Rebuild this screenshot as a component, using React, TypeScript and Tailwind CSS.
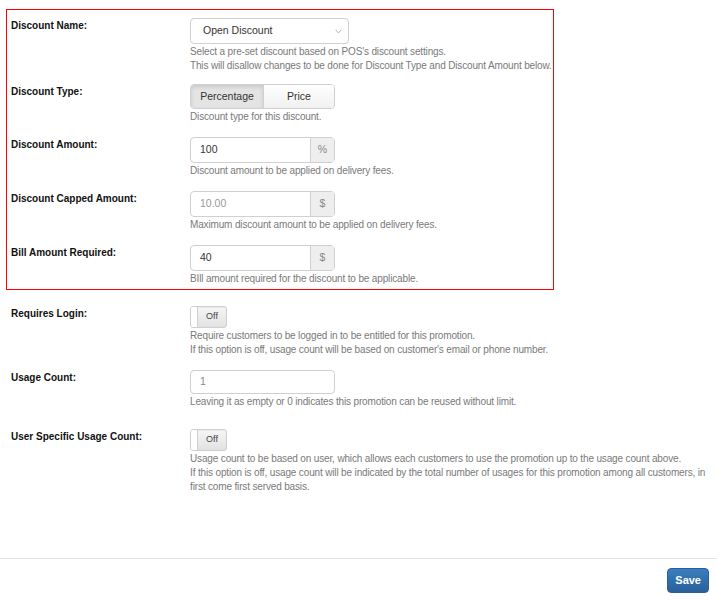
import React from "react"

function Help({ lines }: { lines: string[] }) {
  return (
    <div className="mt-[1px] text-[10px] leading-[14px] tracking-[-0.15px] text-[#7a7a7a]">
      {lines.map((l, i) => (
        <p key={i}>{l}</p>
      ))}
    </div>
  )
}

function Row({ label, children, className = "" }: { label: string; children: React.ReactNode; className?: string }) {
  return (
    <div className={"flex " + className}>
      <label className="w-[179px] shrink-0 pt-[1px] text-[10px] font-bold leading-[14px] text-[#111]">{label}</label>
      <div className="flex flex-col">{children}</div>
    </div>
  )
}

function AddonInput({ value, addon, muted }: { value: string; addon: string; muted?: boolean }) {
  return (
    <div className="flex h-[26px] w-[145px] rounded-[4px] border border-[#d0d0d0]">
      <div className={"flex flex-1 items-center px-[9px] text-[10.5px] " + (muted ? "text-[#9a9a9a]" : "text-[#333]")}>
        {value}
      </div>
      <div className="flex w-[24px] items-center justify-center border-l border-[#d0d0d0] bg-[#eeeeee] text-[10.5px] text-[#888]">
        {addon}
      </div>
    </div>
  )
}

function Toggle() {
  return (
    <div className="flex h-[22px] w-[37px] overflow-hidden rounded-[3px] border border-[#cfcfcf] bg-gradient-to-b from-[#f6f6f6] to-[#e2e2e2] shadow-[inset_0_1px_1px_rgba(0,0,0,0.05)]">
      <div className="w-[7px] border-r border-[#cfcfcf] bg-white" />
      <div className="flex flex-1 items-center justify-center text-[9px] text-[#444]">Off</div>
    </div>
  )
}

export default function App() {
  return (
    <div className="relative h-[601px] w-[717px] bg-white font-['Liberation_Sans',Arial,sans-serif]">
      <div className="pt-[9px] pl-[6px]">
        <div className="w-[548px] border border-[#ff0000] pl-[4px] pt-[8px] pb-[3px]">
          <Row label="Discount Name:" className="mb-[11px]">
            <div className="flex h-[26px] w-[159px] items-center justify-between rounded-[4px] border border-[#d0d0d0] bg-white pl-[12px] pr-[6px] text-[10.5px] text-[#333]">
              <span>Open Discount</span>
              <svg width="7" height="5" viewBox="0 0 7 5" className="text-[#999]">
                <path d="M0.5 0.8 L3.5 3.8 L6.5 0.8" fill="none" stroke="currentColor" strokeWidth="0.8" />
              </svg>
            </div>
            <Help
              lines={[
                "Select a pre-set discount based on POS's discount settings.",
                "This will disallow changes to be done for Discount Type and Discount Amount below.",
              ]}
            />
          </Row>

          <Row label="Discount Type:" className="mb-[13px]">
            <div className="flex h-[25px] w-[145px] overflow-hidden rounded-[4px] border border-[#d0d0d0] text-[10.5px] text-[#333]">
              <div className="flex w-[73px] items-center justify-center border-r border-[#d0d0d0] bg-[#e4e4e4] shadow-[inset_0_2px_4px_rgba(0,0,0,0.12)]">
                Percentage
              </div>
              <div className="flex flex-1 items-center justify-center bg-gradient-to-b from-white to-[#f0f0f0]">Price</div>
            </div>
            <Help lines={["Discount type for this discount."]} />
          </Row>

          <Row label="Discount Amount:" className="mb-[13px]">
            <AddonInput value="100" addon="%" />
            <Help lines={["Discount amount to be applied on delivery fees."]} />
          </Row>

          <Row label="Discount Capped Amount:" className="mb-[13px]">
            <AddonInput value="10.00" addon="$" muted />
            <Help lines={["Maximum discount amount to be applied on delivery fees."]} />
          </Row>

          <Row label="Bill Amount Required:">
            <AddonInput value="40" addon="$" />
            <Help lines={["BIll amount required for the discount to be applicable."]} />
          </Row>
        </div>
      </div>

      <div className="pl-[11px] pt-[16px]">
        <Row label="Requires Login:" className="mb-[13px]">
          <Toggle />
          <Help
            lines={[
              "Require customers to be logged in to be entitled for this promotion.",
              "If this option is off, usage count will be based on customer's email or phone number.",
            ]}
          />
        </Row>

        <Row label="Usage Count:" className="mb-[20px]">
          <div className="flex h-[24px] w-[145px] items-center rounded-[4px] border border-[#d0d0d0] px-[9px] text-[10.5px] text-[#888]">
            1
          </div>
          <Help lines={["Leaving it as empty or 0 indicates this promotion can be reused without limit."]} />
        </Row>

        <Row label="User Specific Usage Count:">
          <Toggle />
          <div className="w-[516px]">
            <Help
              lines={[
                "Usage count to be based on user, which allows each customers to use the promotion up to the usage count above.",
                "If this option is off, usage count will be indicated by the total number of usages for this promotion among all customers, in first come first served basis.",
              ]}
            />
          </div>
        </Row>
      </div>

      <div className="absolute left-0 right-0 top-[558px] border-t border-[#e5e5e5]">
        <div className="flex justify-end pr-[8px] pt-[9px]">
          <button className="h-[25px] rounded-[4px] border border-[#2a5f94] bg-gradient-to-b from-[#3a7fc0] to-[#295f99] px-[7px] text-[11px] font-bold text-white">
            Save
          </button>
        </div>
      </div>
    </div>
  )
}
